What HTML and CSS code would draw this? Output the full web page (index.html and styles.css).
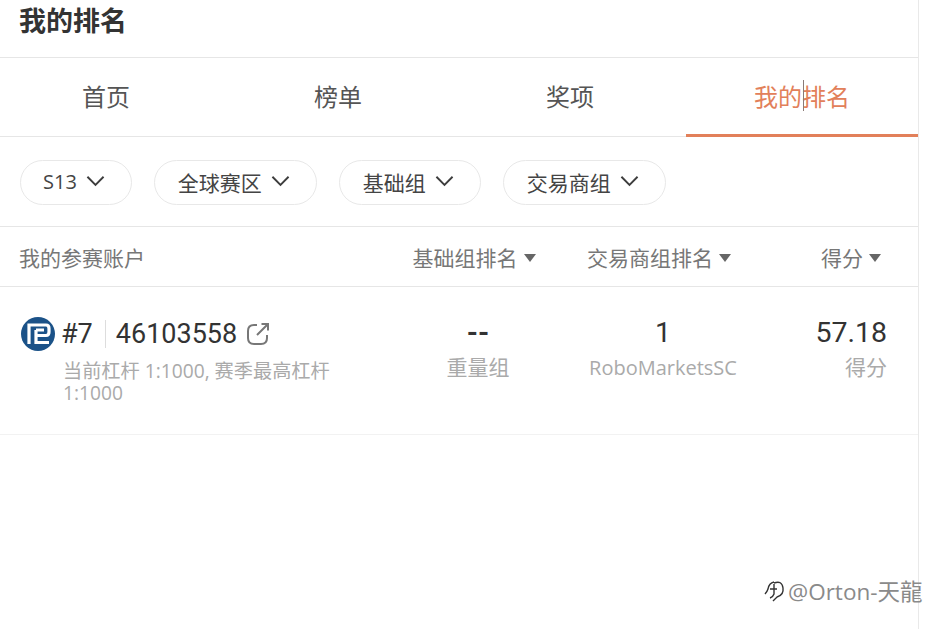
FILE: index.html
```html
<!DOCTYPE html>
<html lang="zh">
<head>
    <meta charset="UTF-8">
    <meta name="viewport" content="width=device-width, initial-scale=1.0">
    <title>我的排名</title>
    <link rel="stylesheet" href="styles.css">
</head>
<body>
<div class="page">
    <h1 class="title">我的排名</h1>

    <div class="tabs">
        <div class="tab">首页</div>
        <div class="tab">榜单</div>
        <div class="tab">奖项</div>
        <div class="tab active">我的排名<span class="caret"></span></div>
    </div>

    <div class="filters">
        <div class="filter filter-season">S13 <svg class="chevron" viewBox="0 0 20 12"><path d="M1.5 1.5 L10 10 L18.5 1.5"/></svg></div>
        <div class="filter">全球赛区 <svg class="chevron" viewBox="0 0 20 12"><path d="M1.5 1.5 L10 10 L18.5 1.5"/></svg></div>
        <div class="filter">基础组 <svg class="chevron" viewBox="0 0 20 12"><path d="M1.5 1.5 L10 10 L18.5 1.5"/></svg></div>
        <div class="filter">交易商组 <svg class="chevron" viewBox="0 0 20 12"><path d="M1.5 1.5 L10 10 L18.5 1.5"/></svg></div>
    </div>

    <div class="table-head">
        <div class="col-account">我的参赛账户</div>
        <div class="col-base">基础组排名<span class="sort"></span></div>
        <div class="col-broker">交易商组排名<span class="sort"></span></div>
        <div class="col-score">得分<span class="sort"></span></div>
    </div>

    <div class="table-row">
        <div class="col-account">
            <div class="account-line">
                <svg class="broker-logo" viewBox="0 0 34 34">
                    <circle cx="17" cy="17" r="17" fill="#1b5288"/>
                    <path d="M8 27 V8 H25 Q28 8 28 11.500 V15 Q28 18.500 25 18.500 H15 M15 13 H23 M15 13 V25.500 H28" fill="none" stroke="#fff" stroke-width="3.200"/>
                </svg>
                <span class="rank">#7</span>
                <span class="account-no">46103558</span>
                <svg class="link-icon" viewBox="0 0 24 24">
                    <path d="M11 3 H8 Q2 3 2 9 V16 Q2 22 8 22 H15 Q21 22 21 16 V13"/>
                    <path d="M11 13 L22 2 M15.500 2 H22 V8.500"/>
                </svg>
            </div>
            <div class="leverage">当前杠杆 1:1000, 赛季最高杠杆 1:1000</div>
        </div>
        <div class="col-base cell">
            <div class="value value-empty">--</div>
            <div class="label">重量组</div>
        </div>
        <div class="col-broker cell">
            <div class="value">1</div>
            <div class="label label-latin">RoboMarketsSC</div>
        </div>
        <div class="col-score cell">
            <div class="value">57.18</div>
            <div class="label">得分</div>
        </div>
    </div>
</div>

<div class="watermark">
    <svg class="watermark-icon" viewBox="0 0 22 24"><path d="M10 3 Q5 4 4 10 Q3 13 1 15 M6 10 H13 M10 4 Q18 1 19 9 Q20 16 13 18 L9 22 M10 5 V15 Q9 18 6 19"/></svg>
    <span>@Orton-天龍</span>
</div>
</body>
</html>
```

FILE: styles.css
```css
* {
    margin: 0;
    padding: 0;
    box-sizing: border-box;
}

body {
    font-family: "Open Sans", "Noto Sans CJK SC", sans-serif;
    background: white;
    color: #333;
    height: 629px;
    overflow: hidden;
    position: relative;
}

.page {
    width: 919px;
    height: 629px;
    border-right: 1px solid #e9e9e9;
    overflow: hidden;
}

.title {
    height: 58px;
    padding: 3px 0 0 19px;
    font-size: 27px;
    line-height: 36px;
    font-weight: 700;
    color: #333;
    border-bottom: 1px solid #e6e6e6;
}

.tabs {
    display: flex;
    height: 79px;
    margin-left: -10px;
    border-bottom: 1px solid #e6e6e6;
}

.tab {
    flex: 1;
    text-align: center;
    font-size: 24px;
    line-height: 78px;
    color: #555;
    position: relative;
}

.tab.active {
    color: #e2805a;
    border-bottom: 3px solid #e2805a;
    height: 79px;
}

.caret {
    position: absolute;
    left: 117px;
    top: 22px;
    width: 1px;
    height: 31px;
    background: #8a7a76;
}

.filters {
    display: flex;
    gap: 22px;
    height: 90px;
    padding: 23px 0 0 20px;
    border-bottom: 1px solid #e6e6e6;
}

.filter {
    display: flex;
    align-items: center;
    gap: 9px;
    height: 45px;
    padding: 0 26px 2px 23px;
    border: 1px solid #e8e8e8;
    border-radius: 23px;
    font-size: 21px;
    color: #444;
}

.filter-season {
    font-size: 20px;
    padding-left: 22px;
}

.chevron {
    width: 19px;
    height: 12px;
    margin-top: -1px;
}

.chevron path {
    fill: none;
    stroke: #3d3d3d;
    stroke-width: 2;
}

.table-head {
    display: flex;
    align-items: center;
    height: 60px;
    border-bottom: 1px solid #e6e6e6;
    font-size: 21px;
    color: #777;
}

.col-account {
    width: 390px;
    padding-left: 20px;
}

.col-base {
    width: 176px;
    text-align: center;
}

.col-broker {
    width: 194px;
    text-align: center;
}

.col-score {
    flex: 1;
    text-align: right;
    padding-right: 31px;
}

.table-head .col-account {
    width: 386px;
    padding-left: 19px;
}

.table-head .col-score {
    padding-right: 37px;
}

.sort {
    display: inline-block;
    margin-left: 6px;
    vertical-align: 4px;
    border-left: 6px solid transparent;
    border-right: 6px solid transparent;
    border-top: 8px solid #666;
}

.table-row {
    display: flex;
    height: 148px;
    padding-top: 27px;
    border-bottom: 1px solid #f2f2f2;
}

.account-line {
    display: flex;
    align-items: center;
    height: 40px;
}

.broker-logo {
    width: 34px;
    height: 34px;
    margin-left: 1px;
    margin-right: 6px;
}

.rank {
    font-family: Roboto, sans-serif;
    font-size: 27px;
    color: #333;
    padding-right: 12px;
    border-right: 1px solid #ddd;
    line-height: 28px;
}

.account-no {
    font-family: Roboto, sans-serif;
    font-size: 27px;
    color: #333;
    margin-left: 10px;
}

.link-icon {
    width: 24px;
    height: 24px;
    margin-left: 9px;
}

.link-icon path {
    fill: none;
    stroke: #777;
    stroke-width: 2;
}

.leverage {
    margin-left: 43px;
    margin-top: 6px;
    width: 285px;
    font-size: 19.200px;
    line-height: 22px;
    color: #aaa;
}

.cell .value {
    font-family: Roboto, sans-serif;
    font-size: 28.500px;
    line-height: 36px;
    margin-top: 1px;
    color: #333;
}

.cell .value-empty {
    font-weight: 700;
}

.cell .label {
    font-size: 21px;
    line-height: 32px;
    color: #aaa;
}

.cell .label-latin {
    font-size: 20px;
    padding-top: 1px;
}

.watermark {
    position: absolute;
    left: 764px;
    top: 574px;
    display: flex;
    align-items: center;
    gap: 2px;
    font-size: 22.500px;
    color: #8a8a8a;
}

.watermark-icon {
    width: 22px;
    height: 24px;
}

.watermark-icon path {
    fill: none;
    stroke: #333;
    stroke-width: 1.400;
}
```
